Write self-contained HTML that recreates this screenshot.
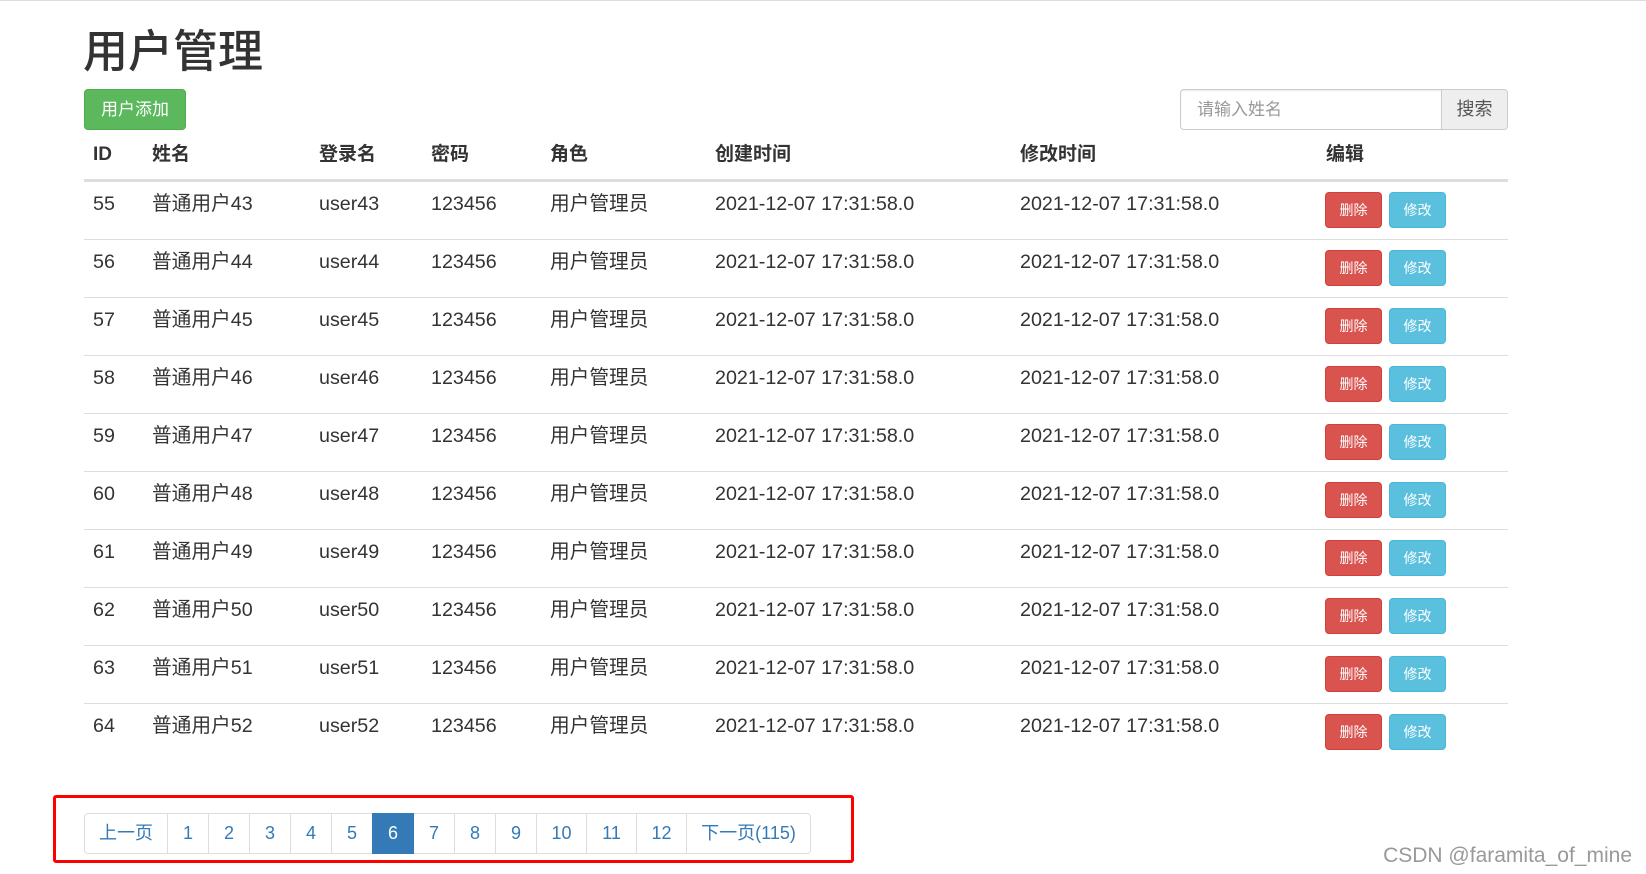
<!DOCTYPE html>
<html><head><meta charset="utf-8">
<style>
*{box-sizing:border-box;margin:0;padding:0}
body{width:1646px;height:874px;background:#fff;font-family:"Liberation Sans","Noto Sans CJK SC",sans-serif;color:#333;position:relative;overflow:hidden;border-top:1px solid #ddd}
.abs{position:absolute}
h1{position:absolute;left:83px;top:23px;font-size:45px;font-weight:500;line-height:56px}
.btn{position:absolute;border-radius:4px;color:#fff;text-align:center}
.add{left:84px;top:88px;width:102px;height:41px;background:#5cb85c;border:1px solid #4cae4c;font-size:17px;line-height:39px}
.inp{left:1180px;top:88px;width:262px;height:41px;border:1px solid #ccc;border-radius:4px 0 0 4px;font-size:17px;color:#999;line-height:39px;padding-left:16px;box-shadow:inset 0 1px 1px rgba(0,0,0,.075)}
.sb{left:1441px;top:88px;width:67px;height:41px;border:1px solid #ccc;border-radius:0 4px 4px 0;background:#eee;font-size:18px;line-height:39px;text-align:center;color:#555}
.th{position:absolute;top:141px;font-size:19px;font-weight:bold;line-height:26px}
.hl{position:absolute;left:84px;top:178px;width:1424px;height:3px;background:#ddd}
.row{position:absolute;left:84px;width:1424px;height:58px;border-bottom:1px solid #ddd}
.row.last{border-bottom:none}
.row span{position:absolute;top:10px;font-size:19.7px;line-height:24px}
.del,.mod{position:absolute;top:10px;width:57px;height:36px;border-radius:4px;color:#fff;font-size:14px;line-height:34px;text-align:center}
.del{left:1241px;background:#d9534f;border:1px solid #d43f3a}
.mod{left:1305px;background:#5bc0de;border:1px solid #46b8da}
.red{left:53px;top:794px;width:801px;height:68px;border:3px solid #f00;border-radius:3px}
.pg{position:absolute;top:812px;height:41px;border:1px solid #ddd;margin-left:-1px;color:#337ab7;font-size:18px;line-height:39px;text-align:center;background:#fff}
.pg.a{background:#337ab7;border-color:#337ab7;color:#fff;z-index:2}
.wm{right:14px;top:842px;font-size:21px;color:#999;line-height:26px}
</style></head><body>
<h1>用户管理</h1>
<div class="btn add">用户添加</div>
<div class="abs inp">请输入姓名</div>
<div class="abs sb">搜索</div>
<div class="th" style="left:93px">ID</div>
<div class="th" style="left:152px">姓名</div>
<div class="th" style="left:319px">登录名</div>
<div class="th" style="left:431px">密码</div>
<div class="th" style="left:550px">角色</div>
<div class="th" style="left:715px">创建时间</div>
<div class="th" style="left:1020px">修改时间</div>
<div class="th" style="left:1326px">编辑</div>
<div class="hl"></div>
<div class="row" style="top:181px"><span style="left:9px">55</span><span style="left:68px">普通用户43</span><span style="left:235px">user43</span><span style="left:347px">123456</span><span style="left:466px">用户管理员</span><span style="left:631px">2021-12-07 17:31:58.0</span><span style="left:936px">2021-12-07 17:31:58.0</span><div class="del">删除</div><div class="mod">修改</div></div>
<div class="row" style="top:239px"><span style="left:9px">56</span><span style="left:68px">普通用户44</span><span style="left:235px">user44</span><span style="left:347px">123456</span><span style="left:466px">用户管理员</span><span style="left:631px">2021-12-07 17:31:58.0</span><span style="left:936px">2021-12-07 17:31:58.0</span><div class="del">删除</div><div class="mod">修改</div></div>
<div class="row" style="top:297px"><span style="left:9px">57</span><span style="left:68px">普通用户45</span><span style="left:235px">user45</span><span style="left:347px">123456</span><span style="left:466px">用户管理员</span><span style="left:631px">2021-12-07 17:31:58.0</span><span style="left:936px">2021-12-07 17:31:58.0</span><div class="del">删除</div><div class="mod">修改</div></div>
<div class="row" style="top:355px"><span style="left:9px">58</span><span style="left:68px">普通用户46</span><span style="left:235px">user46</span><span style="left:347px">123456</span><span style="left:466px">用户管理员</span><span style="left:631px">2021-12-07 17:31:58.0</span><span style="left:936px">2021-12-07 17:31:58.0</span><div class="del">删除</div><div class="mod">修改</div></div>
<div class="row" style="top:413px"><span style="left:9px">59</span><span style="left:68px">普通用户47</span><span style="left:235px">user47</span><span style="left:347px">123456</span><span style="left:466px">用户管理员</span><span style="left:631px">2021-12-07 17:31:58.0</span><span style="left:936px">2021-12-07 17:31:58.0</span><div class="del">删除</div><div class="mod">修改</div></div>
<div class="row" style="top:471px"><span style="left:9px">60</span><span style="left:68px">普通用户48</span><span style="left:235px">user48</span><span style="left:347px">123456</span><span style="left:466px">用户管理员</span><span style="left:631px">2021-12-07 17:31:58.0</span><span style="left:936px">2021-12-07 17:31:58.0</span><div class="del">删除</div><div class="mod">修改</div></div>
<div class="row" style="top:529px"><span style="left:9px">61</span><span style="left:68px">普通用户49</span><span style="left:235px">user49</span><span style="left:347px">123456</span><span style="left:466px">用户管理员</span><span style="left:631px">2021-12-07 17:31:58.0</span><span style="left:936px">2021-12-07 17:31:58.0</span><div class="del">删除</div><div class="mod">修改</div></div>
<div class="row" style="top:587px"><span style="left:9px">62</span><span style="left:68px">普通用户50</span><span style="left:235px">user50</span><span style="left:347px">123456</span><span style="left:466px">用户管理员</span><span style="left:631px">2021-12-07 17:31:58.0</span><span style="left:936px">2021-12-07 17:31:58.0</span><div class="del">删除</div><div class="mod">修改</div></div>
<div class="row" style="top:645px"><span style="left:9px">63</span><span style="left:68px">普通用户51</span><span style="left:235px">user51</span><span style="left:347px">123456</span><span style="left:466px">用户管理员</span><span style="left:631px">2021-12-07 17:31:58.0</span><span style="left:936px">2021-12-07 17:31:58.0</span><div class="del">删除</div><div class="mod">修改</div></div>
<div class="row last" style="top:703px"><span style="left:9px">64</span><span style="left:68px">普通用户52</span><span style="left:235px">user52</span><span style="left:347px">123456</span><span style="left:466px">用户管理员</span><span style="left:631px">2021-12-07 17:31:58.0</span><span style="left:936px">2021-12-07 17:31:58.0</span><div class="del">删除</div><div class="mod">修改</div></div>
<div class="abs red"></div>
<div class="pg" style="left:85px;width:84px;border-radius:4px 0 0 4px">上一页</div>
<div class="pg" style="left:168px;width:42px">1</div>
<div class="pg" style="left:209px;width:42px">2</div>
<div class="pg" style="left:250px;width:42px">3</div>
<div class="pg" style="left:291px;width:42px">4</div>
<div class="pg" style="left:332px;width:42px">5</div>
<div class="pg a" style="left:373px;width:42px">6</div>
<div class="pg" style="left:414px;width:42px">7</div>
<div class="pg" style="left:455px;width:42px">8</div>
<div class="pg" style="left:496px;width:42px">9</div>
<div class="pg" style="left:537px;width:51px">10</div>
<div class="pg" style="left:587px;width:51px">11</div>
<div class="pg" style="left:637px;width:51px">12</div>
<div class="pg" style="left:687px;width:125px;border-radius:0 4px 4px 0">下一页(115)</div>
<div class="abs wm">CSDN @faramita_of_mine</div>
</body></html>
